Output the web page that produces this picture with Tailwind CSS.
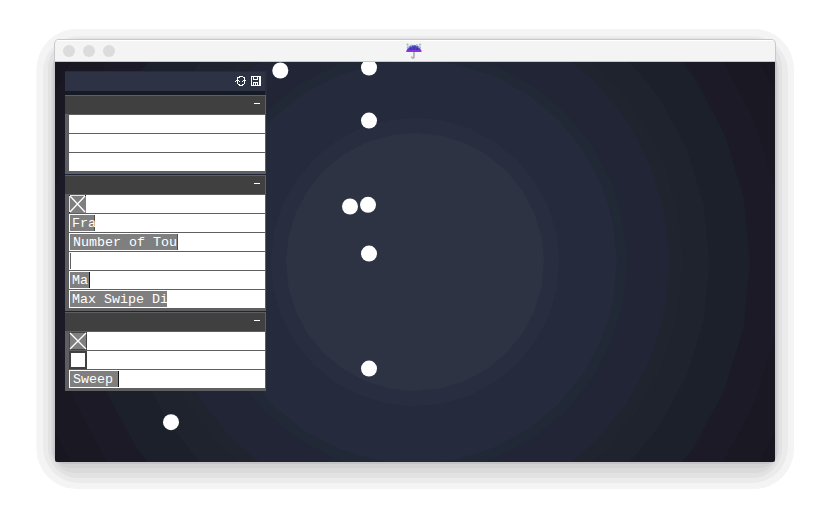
<!DOCTYPE html>
<html lang="en">
<head>
<meta charset="utf-8">
<title>Canvas</title>
<script src="https://cdn.jsdelivr.net/npm/@tailwindcss/browser@4"></script>
</head>
<body class="relative h-[527px] w-[837px] overflow-hidden bg-white pt-[39px] pl-[54px]">
<!-- stepped window shadow -->
<svg class="absolute inset-0" width="837" height="527" aria-hidden="true">
  <rect x="36.5" y="29" width="757.5" height="460" rx="40" fill="#f4f4f4"/>
  <rect x="43" y="36" width="745" height="447" rx="36" fill="#ebebeb"/>
  <rect x="48" y="38" width="734" height="440" rx="30" fill="#e2e2e2"/>
  <rect x="51" y="48" width="728" height="425" rx="24" fill="#dadada"/>
  <rect x="52.5" y="50" width="725" height="418" rx="18" fill="#d2d2d2"/>
  <rect x="53.5" y="52" width="723" height="412" rx="10" fill="#c4c3c5"/>
  <rect x="54" y="39" width="722" height="420" rx="5" fill="#c8c8ca"/>
</svg>
<main class="relative mt-px ml-px w-[720px] overflow-hidden rounded-t-[4px] rounded-b-[2px]">
  <header class="relative flex h-[22px] items-center justify-center border-t border-b border-t-white border-b-[#c9c9cd] bg-[#f4f4f4]">
    <div class="absolute top-[4px] left-[8px] flex gap-2">
      <i class="size-3 rounded-full bg-[#dcdcdc]"></i><i class="size-3 rounded-full bg-[#dcdcdc]"></i><i class="size-3 rounded-full bg-[#dcdcdc]"></i>
    </div>
    <svg class="mr-[2px]" width="16" height="16" viewBox="0 0 16 16">
      <path d="M8 8V13.8Q8 15.2 6.6 15Q5.8 14.8 5.8 13.6" fill="none" stroke="#a9a9ad" stroke-width="1.6"/>
      <path d="M.5 9Q1.2 2.2 8 2Q14.8 2.2 15.2 9Z" fill="#4b46c4"/>
      <path d="M.5 8H15.4" stroke="#8637e2" stroke-width="2"/>
      <path d="M3.5 5L5.5 7M8 4V7M12.3 5L10.5 7" stroke="#3b2fa0" stroke-width="1.2"/>
      <path d="M1 .8L2.2 2.6M4.4 1.8L5.6 3.6M10.4 3.2L11.4 1.4M13.4 2.6L14.6 .8M.8 4.4H3.4M12.4 4.4H15" stroke="#a3bcc4" stroke-width="1.8"/>
      <path d="M6.6 2.4H8.4" stroke="#58b4cf" stroke-width="1.2"/>
    </svg>
  </header>
  <section class="relative flex h-[400px] bg-[#171621] pt-[9px] pl-[10px]">
    <svg class="absolute inset-0" width="720" height="400"><g id="rings"></g>
      <g fill="#fff"><circle cx="225.3" cy="8.5" r="8"/><circle cx="314" cy="5.5" r="8"/><circle cx="314" cy="58.6" r="8"/><circle cx="295" cy="144.5" r="8"/><circle cx="313" cy="142.8" r="8"/><circle cx="314" cy="191.6" r="8"/><circle cx="314" cy="306.6" r="8"/><circle cx="116" cy="360.2" r="8"/></g>
    </svg>
    <div class="relative flex h-[320px] w-[201px] flex-col font-['Liberation_Mono',monospace] text-[13.33px] leading-[18px] text-white shadow-[1px_0_0_#252b39]">
      <div class="h-5 shrink-0 border-t border-r border-[#252b39] bg-[#2d3345]">
        <svg width="200" height="19" viewBox="65 72 200 19" shape-rendering="crispEdges">
          <path d="M239 76h4v1h-4zM237 77h3v1h-3zM243 77h2v1h-2zM237 78h1v2h-1zM244 78h1v2h-1zM236 80h3v1h-3zM235 81h1v1h-1zM237 81h1v1h-1zM239 81h1v1h-1zM243 80h3v1h-3zM242 81h1v1h-1zM244 81h1v1h-1zM237 82h1v2h-1zM244 82h1v2h-1zM238 84h2v1h-2zM242 84h2v1h-2zM239 85h4v1h-4z" fill="#fff"/>
          <path d="M250.500 76h10v10h-10zM252 77v8h7v-8z" fill="#fff" fill-rule="evenodd"/>
          <path d="M253 77h1v3h-1zM257 77h1v3h-1zM253 79h5v1h-5zM253 82h5v1h-5zM253 83h1v2h-1zM255 83h1v2h-1zM257 83h1v2h-1z" fill="#fff"/>
        </svg>
      </div>
      <div class="h-1 shrink-0 border-r border-[#252b39] bg-[#161a25]"></div>
      <div class="flex flex-col gap-px bg-[#202439]">
        <div class="border border-b-0 border-l-0 border-[#5f5f61] bg-[#5f5f61] pb-[3px]">
          <div class="flex h-[18px] justify-end bg-[#404040] pt-[7px] pr-[5px]"><i class="h-px w-1.5 bg-white"></i></div>
          <div class="flex flex-col gap-px pt-px pl-1">
            <div class="h-[18px] bg-white"></div><div class="h-[18px] bg-white"></div><div class="h-[18px] bg-white"></div>
          </div>
        </div>
        <div class="border border-b-0 border-l-0 border-[#5f5f61] bg-[#5f5f61] pb-[3px]">
          <div class="flex h-[18px] justify-end bg-[#404040] pt-[7px] pr-[5px]"><i class="h-px w-1.5 bg-white"></i></div>
          <div class="flex flex-col gap-px pt-px pl-1">
            <div class="h-[18px] bg-white"><svg width="17" height="18"><path d="M0 0h17v18H0z" fill="#7f7f7f"/><path d="M0 .5h17M.5 0v18" stroke="#e4e4e4"/><path d="M1 1L16 17M16 1L1 17" stroke="#fff" stroke-width="1.3"/><path d="M0 0h1v1H0zM16 0h1v1h-1zM0 17h1v1H0z" fill="#222"/></svg></div>
            <div class="h-[18px] bg-white pt-px pl-px"><div class="h-4 w-[25px] overflow-hidden bg-[#7f7f7f] pl-[2px] shadow-[inset_-1px_0_0_#505050]">Fra</div></div>
            <div class="h-[18px] bg-white pt-px pl-px"><div class="h-4 w-[108px] overflow-hidden border-r border-[#505050] bg-[#7f7f7f] pl-[3px] whitespace-nowrap">Number of Tou</div></div>
            <div class="h-[18px] bg-white pt-px pl-px"><div class="h-4 w-px bg-[#5f5f61]"></div></div>
            <div class="h-[18px] bg-white pt-px pl-px"><div class="h-4 w-[20px] overflow-hidden border-r border-[#151515] bg-[#7f7f7f] pl-[2px]">Ma</div></div>
            <div class="h-[18px] bg-white pt-px pl-px"><div class="h-4 w-[97px] overflow-hidden bg-[#7f7f7f] pl-[2px] whitespace-nowrap">Max Swipe Di</div></div>
          </div>
        </div>
        <div class="border border-b-0 border-l-0 border-[#5f5f61] bg-[#5f5f61] pb-[3px]">
          <div class="flex h-[18px] justify-end bg-[#404040] pt-[7px] pr-[5px]"><i class="h-px w-1.5 bg-white"></i></div>
          <div class="flex flex-col gap-px pt-px pl-1">
            <div class="h-[18px] bg-white"><svg width="18" height="18"><path d="M0 0h18v18H0z" fill="#444"/><path d="M1 1h16v16H1z" fill="#7f7f7f"/><path d="M1 1L17 17M17 1L1 17" stroke="#fff" stroke-width="1.3"/></svg></div>
            <div class="h-[18px] bg-white"><div class="size-[18px] border-t-2 border-r-2 border-b-2 border-l-2 border-[#404040] bg-white"></div></div>
            <div class="h-[18px] bg-white pt-px pl-px"><div class="h-4 w-[49px] overflow-hidden border-r border-[#151515] bg-[#7f7f7f] pl-[3px]">Sweep</div></div>
          </div>
        </div>
      </div>
    </div>
  </section>
</main>
<script>
// Concentric 32-sided rings, outermost first.
const rings = [[400,'#191823'],[368,'#1c1a26'],[335,'#1b202b'],[294.5,'#1f232e'],[268,'#20242f'],[255,'#222535'],[212,'#222936'],[202,'#252a3d'],[144.5,'#282d40'],[129,'#2e3344']];
document.getElementById('rings').innerHTML = rings.map(([r, c]) => {
  const pts = Array.from({length: 32}, (_, i) => {
    const a = i * Math.PI / 16;
    return (360 + r * Math.cos(a)).toFixed(1) + ',' + (200 + r * Math.sin(a)).toFixed(1);
  });
  return `<polygon points="${pts.join(' ')}" fill="${c}"/>`;
}).join('');
</script>
</body>
</html>
